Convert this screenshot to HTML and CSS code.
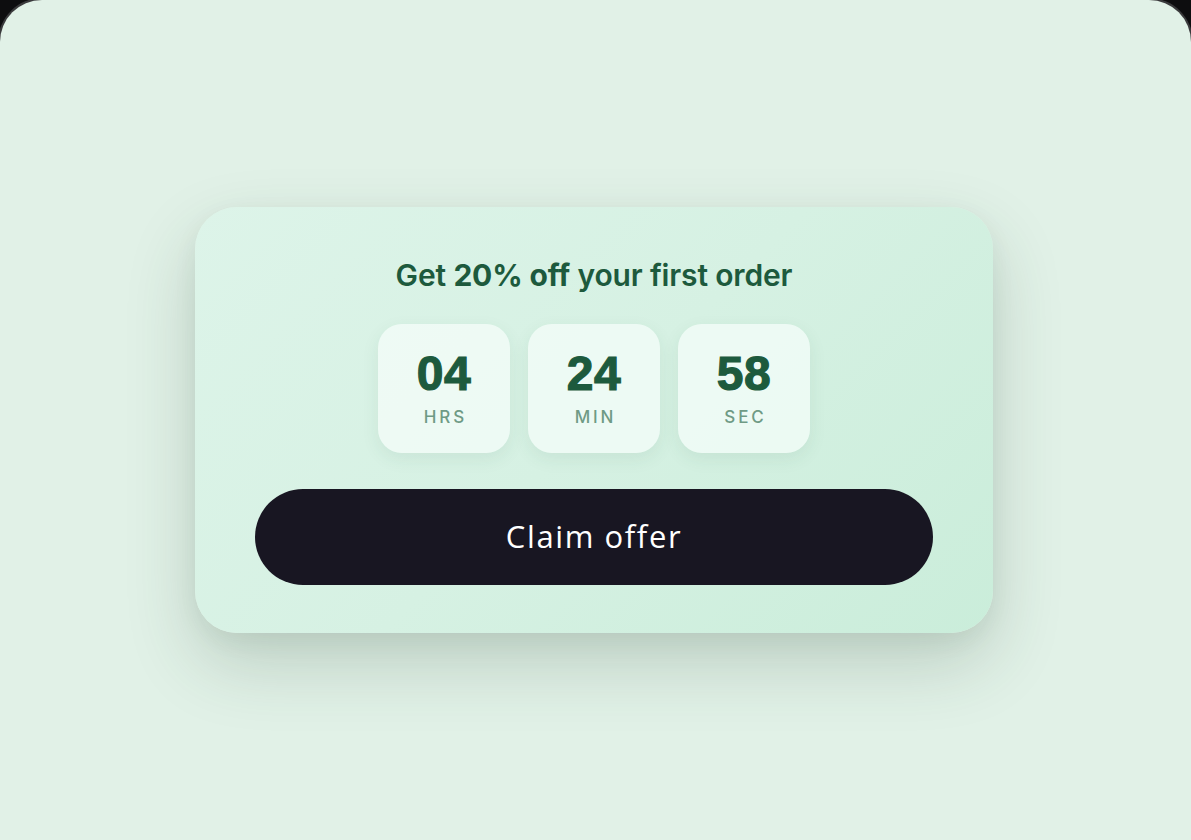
FILE: index.html
```html
<!DOCTYPE html>
<html lang="en">
<head>
<meta charset="utf-8">
<title>Offer</title>
<link rel="stylesheet" href="styles.css">
</head>
<body>
<div class="frame">
  <div class="card">
    <h1 class="title">Get <strong>20% off</strong> your first order</h1>
    <div class="timer">
      <div class="unit"><span class="num">04</span><span class="lbl">HRS</span></div>
      <div class="unit"><span class="num">24</span><span class="lbl">MIN</span></div>
      <div class="unit"><span class="num">58</span><span class="lbl">SEC</span></div>
    </div>
    <button class="cta">Claim offer</button>
  </div>
</div>
</body>
</html>
```
FILE: styles.css
```css
* { box-sizing: border-box; }
html, body { margin: 0; padding: 0; }
body {
  background: #0d0d0f;
  width: 1191px;
  height: 840px;
  overflow: hidden;
  font-family: Inter, "Open Sans", sans-serif;
}
.frame {
  width: 1191px;
  height: 840px;
  background: #e1f1e7;
  border-radius: 42px 42px 0 0;
  box-shadow: 0 0 0 2px #3a3a3c;
  display: flex;
  align-items: flex-start;
  justify-content: center;
  padding-top: 207px;
  padding-right: 3px;
}
.card {
  width: 798px;
  height: 426px;
  border-radius: 42px;
  background: linear-gradient(135deg, #ddf4e9 0%, #d6f1e3 50%, #caedda 100%);
  box-shadow: 0 30px 70px rgba(40, 70, 50, 0.20), 0 8px 24px rgba(40, 70, 50, 0.06);
  padding: 50px 60px 48px;
  display: flex;
  flex-direction: column;
  align-items: center;
}
.title {
  margin: 0;
  font-size: 30px;
  line-height: 36px;
  font-weight: 600;
  color: #1d5a3d;
  letter-spacing: -0.15px;
}
.title strong { font-weight: 700; }
.timer {
  display: flex;
  gap: 18px;
  margin-top: 31px;
}
.unit {
  width: 132px;
  height: 129px;
  border-radius: 24px;
  background: rgba(244, 252, 248, 0.78);
  box-shadow: 0 6px 18px rgba(40, 90, 60, 0.08);
  display: flex;
  flex-direction: column;
  align-items: center;
  padding-top: 24px;
}
.num {
  font-family: "Liberation Sans", Arial, sans-serif;
  font-size: 48px;
  line-height: 52px;
  font-weight: 700;
  color: #1d5a3d;
  -webkit-text-stroke: 1.2px #1d5a3d;
  letter-spacing: 0.5px;
}
.lbl {
  margin-top: 6px;
  font-size: 17px;
  line-height: 22px;
  font-weight: 500;
  color: #6f9a85;
  letter-spacing: 2.8px;
  padding-left: 2.8px;
}
.cta {
  margin-top: 36px;
  width: 678px;
  height: 96px;
  border: none;
  border-radius: 48px;
  background: #181622;
  color: #ffffff;
  font-family: "Open Sans", Inter, sans-serif;
  font-size: 31px;
  font-weight: 500;
  letter-spacing: 1.6px;
  padding-bottom: 4px;
  cursor: pointer;
}
```
